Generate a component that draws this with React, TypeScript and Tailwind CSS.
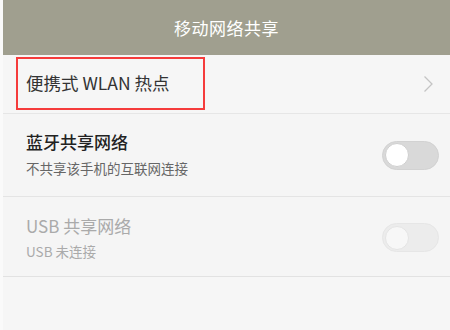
import React from "react";

const font = { fontFamily: '"Noto Sans CJK SC", "Noto Sans", sans-serif' };

function Toggle({ disabled }: { disabled?: boolean }) {
  return (
    <div
      className={`w-[57px] h-[29px] rounded-full p-[2px] flex items-center ${
        disabled ? "bg-[#ececec] border border-[#e6e6e6]" : "bg-[#d9d9d9] border border-[#d2d2d2]"
      }`}
    >
      <div
        className={`w-[24px] h-[24px] rounded-full ${
          disabled ? "bg-[#f7f7f7] border border-[#e4e4e4]" : "bg-white border border-[#cfcfcf]"
        }`}
      />
    </div>
  );
}

export default function App() {
  return (
    <div className="w-[450px] h-[330px] bg-[#f5f5f5] flex flex-col overflow-hidden border-l-[3px] border-l-[#fafafa]" style={font}>
      <div className="h-[55px] bg-[#a09f8f] flex items-center justify-center shrink-0">
        <span className="text-white text-[17px] tracking-[0.5px] pt-[1px]">移动网络共享</span>
      </div>
      <div className="h-[59px] flex items-center pl-[13px] pr-[16px] border-b border-[#e6e6e6] shrink-0 bg-[#f6f6f6]">
        <div className="h-[53px] w-[189px] border-[2px] border-[#f53c3c] flex items-center pl-[8px] -mt-[2px]">
          <span className="text-[#333] text-[17.5px]">便携式 WLAN 热点</span>
        </div>
        <div className="flex-1" />
        <svg width="11" height="18" viewBox="0 0 11 18">
          <path d="M1.5 1.5 L9 9 L1.5 16.5" fill="none" stroke="#c4c4c4" strokeWidth="1.3" />
        </svg>
      </div>
      <div className="h-[83px] flex items-center pl-[23px] pr-[11px] border-b border-[#e4e4e4] shrink-0">
        <div className="flex flex-col -mt-[2px]">
          <span className="text-[#222] text-[17px] leading-[22px] font-medium">蓝牙共享网络</span>
          <span className="text-[#666] text-[13.5px] leading-[18px] mt-[6px]">不共享该手机的互联网连接</span>
        </div>
        <div className="flex-1" />
        <Toggle />
      </div>
      <div className="h-[80px] flex items-center pl-[23px] pr-[11px] border-b border-[#e2e2e2] shrink-0">
        <div className="flex flex-col mt-[1px]">
          <span className="text-[#aaa] text-[17px] leading-[22px]">USB 共享网络</span>
          <span className="text-[#aaa] text-[13.5px] leading-[18px] mt-[5px]">USB 未连接</span>
        </div>
        <div className="flex-1" />
        <div className="mt-[2px]">
          <Toggle disabled />
        </div>
      </div>
      <div className="flex-1 bg-[#f6f6f6]" />
    </div>
  );
}
